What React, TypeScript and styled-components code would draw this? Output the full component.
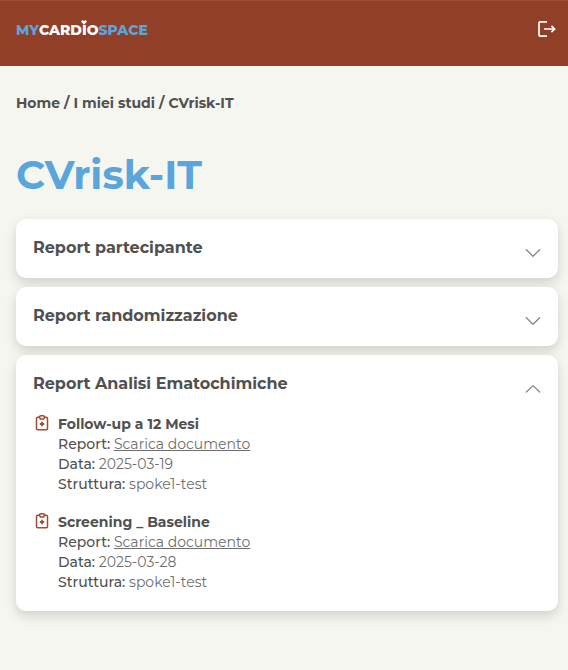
import React, { useState } from 'react';
import styled, { createGlobalStyle } from 'styled-components';

const GlobalStyle = createGlobalStyle`
  * { box-sizing: border-box; }
  body {
    margin: 0;
    background: #f5f6f0;
    color: #505050;
    font-family: Montserrat, Inter, "Open Sans", sans-serif;
    font-size: 14px;
    line-height: 20px;
  }
`;

const TopBar = styled.header`
  display: flex;
  align-items: flex-start;
  justify-content: space-between;
  height: 66px;
  padding: 19px 12px 0 16px;
  background: #923f28;
  border-top: 1px solid #9a4e39;
`;

const Logo = styled.a`
  display: flex;
  color: #5aa5dc;
  font-size: 14px;
  font-weight: 800;
  line-height: 20px;
  text-decoration: none;
`;

const LogoWhite = styled.span`
  color: #fff;
`;

const LogoI = styled.span`
  position: relative;
  svg {
    position: absolute;
    top: -1px;
    left: 50%;
    transform: translateX(-50%);
  }
`;

const IconButton = styled.button`
  display: flex;
  padding: 0;
  border: 0;
  background: none;
  color: #fff;
  cursor: pointer;
`;

const Page = styled.main`
  padding: 27px 10px 40px 16px;
`;

const Breadcrumb = styled.nav`
  font-weight: 700;
  line-height: 20px;
  a {
    color: inherit;
    text-decoration: none;
  }
`;

const Title = styled.h1`
  margin: 37px 0 20px;
  color: #5aa5dc;
  font-size: 40px;
  font-weight: 700;
  line-height: 49px;
`;

const Cards = styled.div`
  display: grid;
  gap: 9px;
`;

const Card = styled.section`
  padding: 0 17px;
  border-radius: 10px;
  background: #fff;
  box-shadow: 0 5px 12px rgba(0, 0, 0, 0.15);
`;

const CardHeading = styled.h2`
  margin: 0;
`;

const CardToggle = styled.button`
  display: flex;
  align-items: flex-start;
  justify-content: space-between;
  width: 100%;
  height: 59px;
  padding: 19px 0 0;
  border: 0;
  background: none;
  color: inherit;
  font: inherit;
  font-size: 16px;
  font-weight: 700;
  line-height: 20px;
  text-align: left;
  cursor: pointer;
  svg {
    margin-top: 7px;
  }
`;

const Reports = styled.ul`
  display: grid;
  gap: 18px;
  margin: 0;
  padding: 0 0 19px;
  list-style: none;
`;

const Report = styled.li`
  display: flex;
  gap: 8px;
  > svg {
    flex: none;
    margin: 0 0 0 1px;
  }
`;

const ReportName = styled.h3`
  margin: 0;
  font-size: 14px;
  font-weight: 700;
  line-height: 20px;
`;

const Line = styled.p`
  margin: 0;
  font-weight: 500;
`;

const Value = styled.span`
  color: #6e6e6e;
  font-weight: 400;
`;

const Download = styled.a`
  color: #6e6e6e;
  font-weight: 400;
  text-underline-offset: 1px;
`;

const Heart = () => (
  <svg width="6" height="5" viewBox="0 0 6 5" fill="#fff" aria-hidden="true">
    <path d="M3 4.8 0.5 2.3C-.4 1.2 1.6-.6 3 1 4.4-.6 6.4 1.2 5.5 2.3Z" />
  </svg>
);

const ExitIcon = () => (
  <svg width="18" height="18" viewBox="0 0 18 18" fill="none" stroke="currentColor" strokeWidth="1.7" aria-hidden="true">
    <path d="M9 1.8H2.2Q1 1.8 1 3V15Q1 16.2 2.2 16.2H9" />
    <path d="M6 9H16.5M13.4 5.8 16.6 9 13.4 12.2" />
  </svg>
);

const Chevron = ({ up }: { up: boolean }) => (
  <svg width="16" height="16" viewBox="0 0 16 16" fill="none" stroke="#858585" strokeWidth="1.3" strokeLinecap="round" strokeLinejoin="round" aria-hidden="true">
    <path d={up ? 'M1.3 11 8 4.6 14.7 11' : 'M1.3 4.8 8 11.2 14.7 4.8'} />
  </svg>
);

const ClipboardIcon = () => (
  <svg width="16" height="18" viewBox="0 0 16 18" fill="none" stroke="#a04c36" strokeWidth="1.5" aria-hidden="true">
    <path d="M5.4 3.2H3.7Q2.5 3.2 2.5 4.4V14.6Q2.5 15.8 3.7 15.8H12.3Q13.5 15.8 13.5 14.6V4.4Q13.5 3.2 12.3 3.2H10.6" />
    <path d="M5.4 2.8Q5.6 1.7 6.8 1.7H9.2Q10.4 1.7 10.6 2.8L10 4.5Q9.7 5 9 5H7Q6.3 5 6 4.5Z" />
    <path d="M8 7.8V12.2M5.8 10H10.2" strokeWidth="1.8" />
  </svg>
);

const reports = [
  { name: 'Follow-up a 12 Mesi', date: '2025-03-19', site: 'spoke1-test' },
  { name: 'Screening _ Baseline', date: '2025-03-28', site: 'spoke1-test' },
];

function Accordion({ title, initiallyOpen = false, children }: { title: string; initiallyOpen?: boolean; children?: React.ReactNode }) {
  const [open, setOpen] = useState(initiallyOpen);
  return (
    <Card>
      <CardHeading>
        <CardToggle type="button" aria-expanded={open} onClick={() => setOpen(!open)}>
          {title}
          <Chevron up={open} />
        </CardToggle>
      </CardHeading>
      {open && children}
    </Card>
  );
}

export default function App() {
  return (
    <>
      <GlobalStyle />
      <TopBar>
        <Logo href="#">
          <span>MY</span>
          <LogoWhite>CARD<LogoI>I<Heart /></LogoI>O</LogoWhite>
          <span>SPACE</span>
        </Logo>
        <IconButton type="button" aria-label="Esci">
          <ExitIcon />
        </IconButton>
      </TopBar>
      <Page>
        <Breadcrumb aria-label="Percorso">
          <a href="#">Home</a> / <a href="#">I miei studi</a> / <span>CVrisk-IT</span>
        </Breadcrumb>
        <Title>CVrisk-IT</Title>
        <Cards>
          <Accordion title="Report partecipante" />
          <Accordion title="Report randomizzazione" />
          <Accordion title="Report Analisi Ematochimiche" initiallyOpen>
            <Reports>
              {reports.map((report) => (
                <Report key={report.name}>
                  <ClipboardIcon />
                  <div>
                    <ReportName>{report.name}</ReportName>
                    <Line>Report: <Download href="#">Scarica documento</Download></Line>
                    <Line>Data: <Value>{report.date}</Value></Line>
                    <Line>Struttura: <Value>{report.site}</Value></Line>
                  </div>
                </Report>
              ))}
            </Reports>
          </Accordion>
        </Cards>
      </Page>
    </>
  );
}
